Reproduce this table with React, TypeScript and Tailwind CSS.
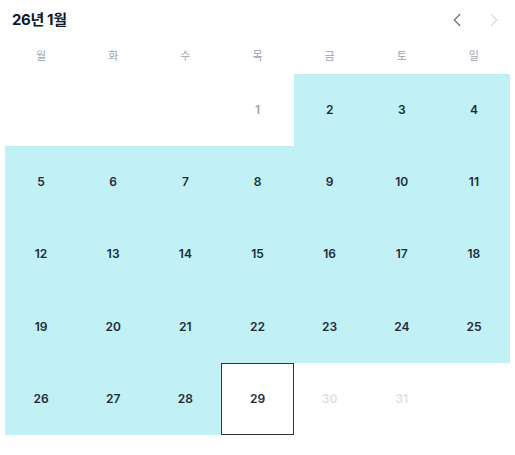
import { ChevronLeft, ChevronRight } from 'lucide-react'

const WEEKDAYS = ['월', '화', '수', '목', '금', '토', '일']

type Day = { n: number | null; inRange?: boolean; muted?: boolean; faded?: boolean; today?: boolean }

// Jan 2026 starts on Thursday; range 2 ~ 28, today 29
const DAYS: Day[] = [
  { n: null }, { n: null }, { n: null },
  { n: 1, muted: true },
  ...Array.from({ length: 27 }, (_, i) => ({ n: i + 2, inRange: true })),
  { n: 29, today: true },
  { n: 30, faded: true },
  { n: 31, faded: true },
  { n: null },
]

export default function App() {
  return (
    <div
      className="w-[515px] h-[455px] bg-white"
      style={{ fontFamily: 'Inter, "Noto Sans CJK KR", sans-serif' }}
    >
      {/* Header */}
      <div className="h-10 flex items-center justify-between pl-3 pr-[10px]">
        <h1 className="text-[15px] font-bold text-[#111827] tracking-tight">26년 1월</h1>
        <div className="flex items-center gap-[15px]">
          <button className="text-[#6b7280]">
            <ChevronLeft size={22} strokeWidth={1.4} />
          </button>
          <button className="text-[#dcdfe3]">
            <ChevronRight size={22} strokeWidth={1.4} />
          </button>
        </div>
      </div>

      {/* Weekdays */}
      <div className="mx-[5px] grid grid-cols-7 h-[34px] items-center">
        {WEEKDAYS.map(w => (
          <div key={w} className="text-center text-[11px] text-[#9ca3af] pb-[2px]">
            {w}
          </div>
        ))}
      </div>

      {/* Days */}
      <div className="mx-[5px] grid grid-cols-7">
        {DAYS.map((d, i) => (
          <div
            key={i}
            className={
              'h-[72.2px] flex items-center justify-center text-[12px] font-semibold ' +
              (d.inRange ? 'bg-[#c1f0f5] text-[#1f2937] ' : '') +
              (d.muted ? 'text-[#9ca3af] ' : '') +
              (d.faded ? 'text-[#dde0e4] ' : '') +
              (d.today ? 'border border-[#333] text-[#1f2937] ' : '')
            }
          >
            {d.n}
          </div>
        ))}
      </div>
    </div>
  )
}
